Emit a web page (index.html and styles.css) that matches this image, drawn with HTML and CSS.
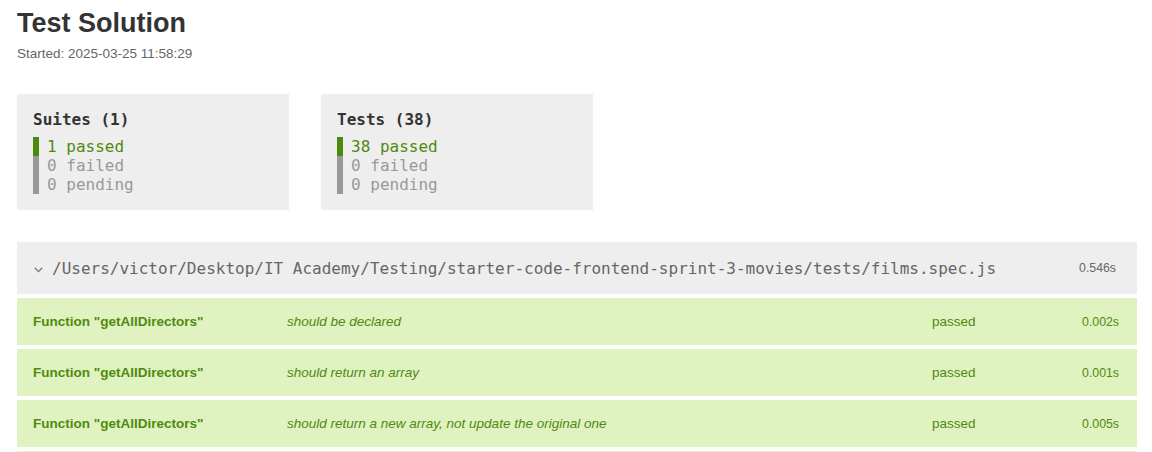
FILE: index.html
```html
<!DOCTYPE html>
<html lang="en">
<head>
<meta charset="utf-8">
<title>Test Solution</title>
<link rel="stylesheet" href="styles.css">
</head>
<body>
<header class="page-head">
  <h1 class="title">Test Solution</h1>
  <p class="started">Started: 2025-03-25 11:58:29</p>
</header>

<section class="summary">
  <div class="summary-box">
    <div class="summary-title">Suites (1)</div>
    <div class="summary-line passed">1 passed</div>
    <div class="summary-line failed">0 failed</div>
    <div class="summary-line pending">0 pending</div>
  </div>
  <div class="summary-box">
    <div class="summary-title">Tests (38)</div>
    <div class="summary-line passed">38 passed</div>
    <div class="summary-line failed">0 failed</div>
    <div class="summary-line pending">0 pending</div>
  </div>
</section>

<section class="suite">
  <div class="suite-head">
    <svg class="chevron" width="9" height="6" viewBox="0 0 9 6"><polyline points="0.8,0.8 4.5,4.6 8.2,0.8" fill="none" stroke="#777" stroke-width="1.3"/></svg>
    <span class="suite-path">/Users/victor/Desktop/IT Academy/Testing/starter-code-frontend-sprint-3-movies/tests/films.spec.js</span>
    <span class="suite-time">0.546s</span>
  </div>
  <div class="tests">
    <div class="test-row">
      <span class="test-suite">Function "getAllDirectors"</span>
      <span class="test-title">should be declared</span>
      <span class="test-status">passed</span>
      <span class="test-time">0.002s</span>
    </div>
    <div class="test-row">
      <span class="test-suite">Function "getAllDirectors"</span>
      <span class="test-title">should return an array</span>
      <span class="test-status">passed</span>
      <span class="test-time">0.001s</span>
    </div>
    <div class="test-row">
      <span class="test-suite">Function "getAllDirectors"</span>
      <span class="test-title">should return a new array, not update the original one</span>
      <span class="test-status">passed</span>
      <span class="test-time">0.005s</span>
    </div>
    <div class="test-row">
      <span class="test-suite">Function "getAllDirectors"</span>
      <span class="test-title">should return an array of strings</span>
      <span class="test-status">passed</span>
      <span class="test-time">0.001s</span>
    </div>
  </div>
</section>
</body>
</html>
```

FILE: styles.css
```css
html, body {
  margin: 0;
  padding: 0;
  background: #fff;
}

body {
  padding: 7px 15px 20px 17px;
  font-family: "Liberation Sans", Arial, sans-serif;
  color: #333;
}

.title {
  margin: 0;
  font-size: 27px;
  line-height: 32px;
  font-weight: bold;
  color: #333;
}

.started {
  margin: 7px 0 0;
  font-size: 13.5px;
  line-height: 16px;
  color: #666;
}

.summary {
  display: flex;
  gap: 32px;
  margin-top: 32px;
}

.summary-box {
  width: 240px;
  padding: 16px;
  background: #eee;
  font-family: "DejaVu Sans Mono", Menlo, monospace;
  font-size: 16px;
  line-height: 19px;
}

.summary-title {
  font-weight: bold;
  color: #333;
  margin-bottom: 8px;
}

.summary-line {
  border-left: 6px solid #999;
  padding-left: 8px;
  color: #999;
}

.summary-line.passed {
  border-left-color: #4f8a10;
  color: #4f8a10;
}

.suite {
  margin-top: 32px;
}

.suite-head {
  display: flex;
  align-items: center;
  height: 52px;
  padding: 0 21px 0 17px;
  background: #eee;
}

.chevron {
  flex: none;
  margin-top: 3px;
  margin-right: 9px;
}

.suite-path {
  flex: 1;
  font-family: "DejaVu Sans Mono", Menlo, monospace;
  font-size: 16px;
  color: #666;
}

.suite-time {
  font-size: 12.3px;
  color: #666;
}

.tests {
  display: flex;
  flex-direction: column;
  gap: 4px;
  margin-top: 4px;
}

.test-row {
  display: grid;
  grid-template-columns: 254px 645px 1fr auto;
  align-items: center;
  height: 47px;
  padding: 0 18px 0 16px;
  background: #dff2bf;
  color: #4f8a10;
  font-size: 13.5px;
}

.test-suite {
  font-weight: bold;
}

.test-title {
  font-style: italic;
}

.test-time {
  font-size: 12.3px;
  text-align: right;
}
```
